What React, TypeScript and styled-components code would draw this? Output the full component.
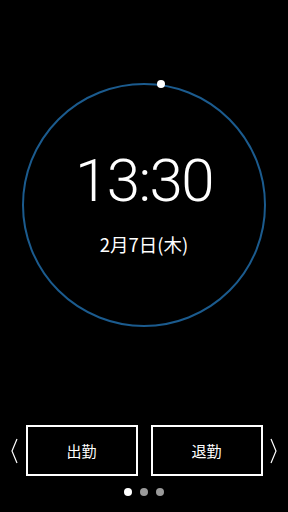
import React from 'react';
import styled, { createGlobalStyle } from 'styled-components';

const GlobalStyle = createGlobalStyle`
  html, body {
    margin: 0;
    padding: 0;
    background: #000;
  }
`;

const Screen = styled.div`
  width: 288px;
  height: 512px;
  background: #000;
  color: #fff;
  display: flex;
  flex-direction: column;
  align-items: center;
  overflow: hidden;
`;

const ClockArea = styled.section`
  padding-top: 83px;
  flex: 1;
  display: flex;
  justify-content: center;
`;

const Ring = styled.div`
  position: relative;
  box-sizing: border-box;
  width: 244px;
  height: 244px;
  border: 2px solid #1b5b8e;
  border-radius: 50%;
  display: flex;
  flex-direction: column;
  align-items: center;
`;

// seconds marker sitting on the ring
const SecondDot = styled.span`
  position: absolute;
  width: 8px;
  height: 8px;
  border-radius: 50%;
  background: #fff;
  top: -5px;
  left: 133px;
`;

const Time = styled.div`
  margin-top: 56px;
  font-family: Roboto, 'Liberation Sans', sans-serif;
  font-weight: 300;
  font-size: 60px;
  line-height: 80px;
  letter-spacing: -1.5px;
`;

const DateLabel = styled.div`
  margin-top: 11px;
  font-family: 'Noto Sans CJK JP', sans-serif;
  font-size: 18.5px;
  line-height: 24px;
`;

const ActionRow = styled.div`
  display: flex;
  align-items: center;
  gap: 13px;
  margin-bottom: 12px;
`;

const Chevron = styled.svg<{ $side: 'left' | 'right' }>`
  width: 10px;
  height: 26px;
  margin: ${(p) => (p.$side === 'left' ? '0 -7px 0 11px' : '0 12px 0 -8px')};
`;

const ActionButton = styled.button`
  box-sizing: border-box;
  width: 112px;
  height: 51px;
  background: transparent;
  border: 2px solid #fff;
  color: #fff;
  font-family: 'Noto Sans CJK JP', sans-serif;
  font-size: 15px;
  padding: 0;
  cursor: pointer;
`;

const Pager = styled.div`
  display: flex;
  gap: 8px;
  margin-bottom: 16px;
`;

const PageDot = styled.span<{ $active?: boolean }>`
  width: 8px;
  height: 8px;
  border-radius: 50%;
  background: ${(p) => (p.$active ? '#fff' : '#9a9a9a')};
`;

export default function App() {
  return (
    <>
      <GlobalStyle />
      <Screen>
        <ClockArea>
          <Ring>
            <SecondDot />
            <Time>13:30</Time>
            <DateLabel>2月7日(木)</DateLabel>
          </Ring>
        </ClockArea>
        <ActionRow>
          <Chevron $side="left" viewBox="0 0 10 26">
            <polyline points="7,1 2,13 7,25" fill="none" stroke="#fff" strokeWidth="1.2" />
          </Chevron>
          <ActionButton>出勤</ActionButton>
          <ActionButton>退勤</ActionButton>
          <Chevron $side="right" viewBox="0 0 10 26">
            <polyline points="3,1 8,13 3,25" fill="none" stroke="#fff" strokeWidth="1.2" />
          </Chevron>
        </ActionRow>
        <Pager>
          <PageDot $active />
          <PageDot />
          <PageDot />
        </Pager>
      </Screen>
    </>
  );
}
